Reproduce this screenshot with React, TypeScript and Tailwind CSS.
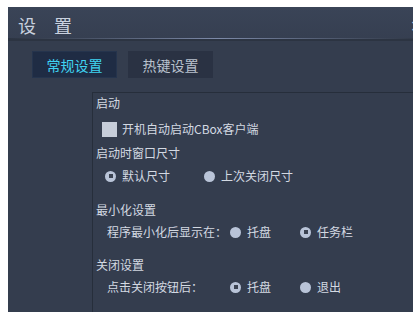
import React from 'react';

const font = { fontFamily: '"Noto Sans CJK SC", "Liberation Sans", sans-serif' };

function Radio({ checked }: { checked?: boolean }) {
  return (
    <span className="flex h-[11px] w-[11px] shrink-0 items-center justify-center rounded-full bg-[#b9c4d8]">
      {checked && <span className="h-[4px] w-[4px] bg-[#3b4352]" />}
    </span>
  );
}

function Option({ label, checked, width }: { label: string; checked?: boolean; width: string }) {
  return (
    <div className={`flex items-center gap-[6px] ${width}`}>
      <Radio checked={checked} />
      <span>{label}</span>
    </div>
  );
}

export default function App() {
  return (
    <div className="h-[312px] w-[413px] overflow-hidden bg-white pl-2 pt-[7px]" style={font}>
      <div className="flex h-full w-[420px] flex-col bg-[#343d4e] text-[12px] leading-[14px] text-[#d3d9e2]">
        <div className="flex h-[31px] items-center justify-between bg-gradient-to-b from-[#3a4457] to-[#363f51] pl-[10px] pt-[5px]">
          <span className="text-[18px] leading-[20px] text-[#c9d1df]">设　置</span>
          <span className="mr-[5px] text-[16px] leading-[16px] text-[#c9d1df]">✕</span>
        </div>
        <div className="h-px bg-gradient-to-r from-[#2c3442] via-[#7d8aa8] to-[#2c3442]" />
        <div className="h-[2px] bg-[#2c3442]" />
        <div className="flex gap-[11px] pl-6 pt-[10px] text-[14px] leading-[16px]">
          <div className="flex h-[27px] w-[85px] items-center justify-center bg-[#1f2c44] text-[#3fd4f2] shadow-[inset_0_0_0_1px_#25344d]">
            常规设置
          </div>
          <div className="flex h-[27px] w-[85px] items-center justify-center bg-[#2a3243] text-[#b9c1cd]">
            热键设置
          </div>
        </div>
        <div className="ml-[84px] mt-[14px] flex-1 border-l border-t border-[#262e3b] pl-[3px]">
          <div className="mt-[3px] h-[14px]">启动</div>
          <div className="mt-[11px] flex h-[16px] items-center gap-[5px] pl-[6px]">
            <span className="h-[15px] w-[15px] bg-[#c6cdd9]" />
            <span>开机自动启动CBox客户端</span>
          </div>
          <div className="mt-[9px] h-[14px]">启动时窗口尺寸</div>
          <div className="mt-[9px] flex h-[14px] items-center pl-[9px]">
            <Option label="默认尺寸" checked width="w-[99px]" />
            <Option label="上次关闭尺寸" width="w-[100px]" />
          </div>
          <div className="mt-[20px] h-[14px]">最小化设置</div>
          <div className="mt-[8px] flex h-[14px] items-center pl-[11px]">
            <span className="w-[123px]">程序最小化后显示在：</span>
            <Option label="托盘" width="w-[70px]" />
            <Option label="任务栏" checked width="w-[70px]" />
          </div>
          <div className="mt-[19px] h-[14px]">关闭设置</div>
          <div className="mt-[8px] flex h-[14px] items-center pl-[11px]">
            <span className="w-[123px]">点击关闭按钮后：</span>
            <Option label="托盘" checked width="w-[70px]" />
            <Option label="退出" width="w-[70px]" />
          </div>
        </div>
      </div>
    </div>
  );
}
